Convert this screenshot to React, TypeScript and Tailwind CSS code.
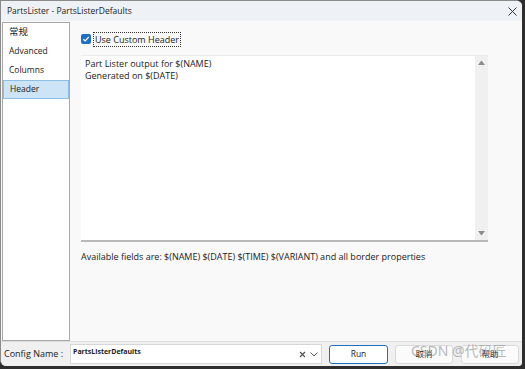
import React from 'react';

const font = { fontFamily: '"Open Sans", "Noto Sans CJK SC", sans-serif' };

const navItems = ['常规', 'Advanced', 'Columns', 'Header'];

const App: React.FC = () => {
  const active = 'Header';

  return (
    <div
      className="relative w-[525px] h-[369px] overflow-hidden bg-[#2e2e2e] text-[#1a1a1a]"
      style={font}
    >
      <div className="flex flex-col w-[522px] h-[366px] bg-[#f9f9f9] border-t border-l border-[#8a8a8a] rounded-tr-[6px] rounded-bl-[6px] rounded-br-[4px] overflow-hidden">
        {/* Title bar */}
        <div className="h-[20px] shrink-0 bg-[#eef2f7] flex items-center justify-between pl-[6px] pr-[5px]">
          <span className="text-[8.5px] leading-none">PartsLister - PartsListerDefaults</span>
          <svg width="9" height="9" viewBox="0 0 9 9" className="text-[#333]">
            <path d="M0.5 0.5 L8.5 8.5 M8.5 0.5 L0.5 8.5" stroke="currentColor" strokeWidth="1" />
          </svg>
        </div>

        {/* Body */}
        <div className="flex flex-1 min-h-0 pt-[1px]">
          {/* Sidebar */}
          <div className="ml-[1px] w-[68px] shrink-0 bg-white border border-[#a7a7a7] flex flex-col">
            {navItems.map((item) => (
              <div
                key={item}
                className={`h-[19px] flex items-center pl-[6px] ${
                  item === active ? 'bg-[#cde4f7] border border-[#8ebde6] pl-[5px]' : ''
                } ${item === '常规' ? 'text-[9.5px]' : 'text-[8.5px]'}`}
              >
                {item}
              </div>
            ))}
          </div>

          {/* Content */}
          <div className="flex-1 pl-[11px] pt-[10px] flex flex-col">
            <div className="flex items-center gap-[2px] h-[14px]">
              <div className="w-[10px] h-[10px] rounded-[2px] bg-[#1f6fc0] flex items-center justify-center">
                <svg width="8" height="8" viewBox="0 0 8 8">
                  <path d="M1.3 4.2 L3.2 6 L6.8 2" stroke="white" strokeWidth="1.2" fill="none" />
                </svg>
              </div>
              <span className="text-[9px] leading-none px-[1px] py-[2px] border border-dotted border-[#333]">
                Use Custom Header
              </span>
            </div>

            <div className="mt-[9px] w-[407px] h-[187px] bg-white border-t border-[#ececec] border-b-2 border-b-[#b9b9b9] flex">
              <div className="flex-1 pl-[4px] pt-[2px] text-[9px] leading-[12px]">
                <div>Part Lister output for $(NAME)</div>
                <div>Generated on $(DATE)</div>
              </div>
              <div className="w-[13px] bg-[#f0f0f0] flex flex-col items-center justify-between py-[4px]">
                <svg width="7" height="5" viewBox="0 0 7 5">
                  <path d="M0 5 L3.5 0.5 L7 5 Z" fill="#8c8c8c" />
                </svg>
                <svg width="7" height="5" viewBox="0 0 7 5">
                  <path d="M0 0 L3.5 4.5 L7 0 Z" fill="#8c8c8c" />
                </svg>
              </div>
            </div>

            <div className="mt-[9px] text-[9px] leading-[12px]">
              Available fields are: $(NAME) $(DATE) $(TIME) $(VARIANT) and all border properties
            </div>
          </div>
        </div>

        {/* Footer */}
        <div className="h-[25px] shrink-0 bg-[#f0f0f0] border-t border-[#dcdcdc] flex items-center">
          <span className="w-[69px] pl-[3px] text-[9px]">Config Name :</span>
          <div className="w-[252px] h-[20px] bg-white border border-[#d6d6d6] flex items-start justify-between pl-[2px] pr-[3px]">
            <span className="text-[7px] font-bold leading-none pt-[3px]">PartsListerDefaults</span>
            <div className="flex items-center gap-[4px] h-full text-[#555]">
              <svg width="7" height="7" viewBox="0 0 7 7">
                <path d="M1 1 L6 6 M6 1 L1 6" stroke="currentColor" strokeWidth="1.2" />
              </svg>
              <svg width="8" height="5" viewBox="0 0 8 5">
                <path d="M0.5 0.5 L4 4 L7.5 0.5" stroke="currentColor" strokeWidth="1" fill="none" />
              </svg>
            </div>
          </div>
          <button className="ml-[7px] w-[59px] h-[19px] bg-white border border-[#1f6fc0] rounded-[3px] text-[8.5px]">
            Run
          </button>
          <button className="ml-[7px] w-[58px] h-[19px] bg-[#fbfbfb] border border-[#d9d9d9] rounded-[3px] text-[8.5px]">
            取消
          </button>
          <button className="ml-[8px] w-[58px] h-[19px] bg-[#fbfbfb] border border-[#d9d9d9] rounded-[3px] text-[8.5px]">
            帮助
          </button>
        </div>
      </div>

      {/* Watermark */}
      <div
        className="absolute left-[411px] top-[344px] text-[14px] text-[#9a9a9a]/70 leading-none pointer-events-none"
        style={{ fontFamily: '"Noto Sans", "Noto Sans CJK SC", sans-serif' }}
      >
        CSDN @代码匠
      </div>
    </div>
  );
};

export default App;
